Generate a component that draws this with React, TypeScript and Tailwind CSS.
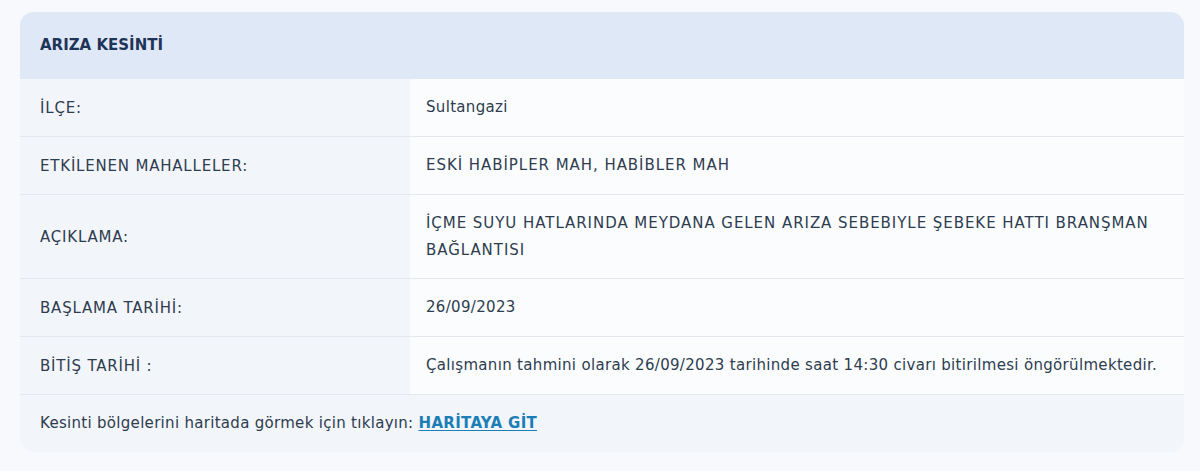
const rows = [
  { label: 'İLÇE:', value: 'Sultangazi', upper: false },
  { label: 'ETKİLENEN MAHALLELER:', value: 'ESKİ HABİPLER MAH, HABİBLER MAH', upper: true },
  {
    label: 'AÇIKLAMA:',
    value: 'İÇME SUYU HATLARINDA MEYDANA GELEN ARIZA SEBEBIYLE ŞEBEKE HATTI BRANŞMAN BAĞLANTISI',
    upper: true,
  },
  { label: 'BAŞLAMA TARİHİ:', value: '26/09/2023', upper: false },
  {
    label: 'BİTİŞ TARİHİ :',
    value: 'Çalışmanın tahmini olarak 26/09/2023 tarihinde saat 14:30 civarı bitirilmesi öngörülmektedir.',
    upper: false,
  },
];

const App = () => {
  return (
    <div
      className="min-h-[471px] w-[1200px] bg-[#f7f9fc] px-5 pt-3 text-[15px] text-[#2e3c4e]"
      style={{ fontFamily: '"DejaVu Sans", "Noto Sans", sans-serif' }}
    >
      <div className="w-[1164px] overflow-hidden rounded-[14px] bg-[#f2f5fa]">
        <div className="flex h-[67px] items-center bg-[#dfe8f6] px-5 text-[15px] font-bold text-[#1f3557]">
          ARIZA KESİNTİ
        </div>
        {rows.map((row) => (
          <div key={row.label} className="flex border-b border-[#e4e8ee]">
            <div className="flex w-[390px] shrink-0 items-center px-5 pt-[2px] tracking-[0.8px]">{row.label}</div>
            <div
              className={
                row.upper
                  ? 'flex min-h-[57px] flex-1 items-center bg-[#fafcfe] py-[14.5px] pl-4 pr-4 leading-[27px] tracking-[0.95px]'
                  : 'flex min-h-[57px] flex-1 items-center bg-[#fafcfe] py-[14.5px] pl-4 pr-4 leading-[27px] tracking-[0.32px]'
              }
            >
              {row.value}
            </div>
          </div>
        ))}
        <div className="flex h-[57px] items-center px-5 tracking-[0.3px]">
          Kesinti bölgelerini haritada görmek için tıklayın:&nbsp;
          <a href="#" className="font-bold text-[#1b7fb6] underline underline-offset-2">
            HARİTAYA GİT
          </a>
        </div>
      </div>
    </div>
  );
};

export default App;
